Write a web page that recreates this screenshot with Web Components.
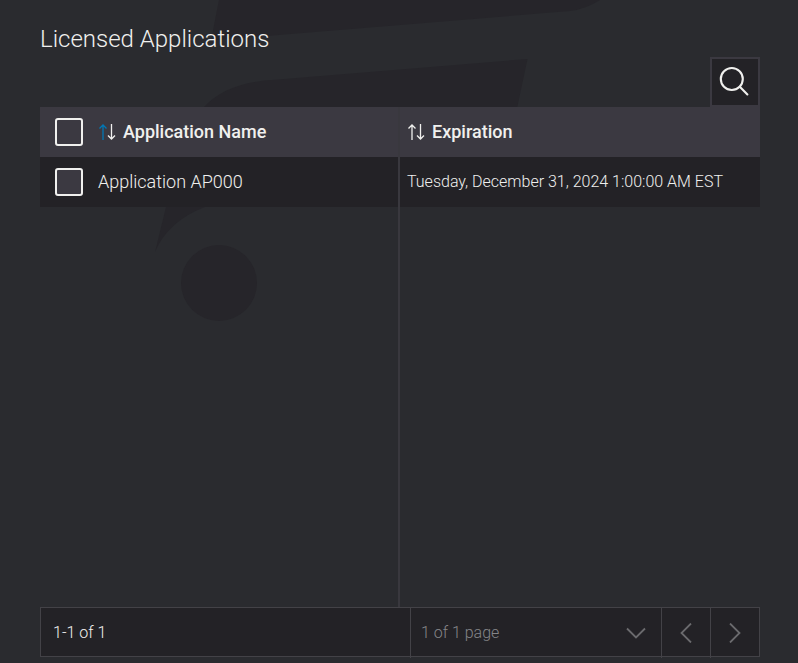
<!DOCTYPE html>
<html lang="en">
<head>
<meta charset="utf-8">
<meta name="viewport" content="width=device-width, initial-scale=1">
<title>Licensed Applications</title>
<style>
html, body { margin: 0; }
body {
  font-family: Roboto, "Liberation Sans", sans-serif;
  font-weight: 300;
  color: #f0f0ee;
  background: #2a2b2f;
  --panel: #232226;
  --head: #3b3941;
  --line: #434247;
  --divider: #39383e;
  --muted: #858588;
  --art: #26252a;
  --accent: #0077b5;
}
</style>
</head>
<body>
<licence-page>
  <span slot="title">Licensed Applications</span>
  <search-button slot="tools"></search-button>
  <licence-table slot="table"></licence-table>
  <page-bar slot="footer" range="1-1 of 1" page="1 of 1 page"></page-bar>
</licence-page>

<script>
class BaseElement extends HTMLElement {
  connectedCallback() {
    if (this.shadowRoot) return;
    this.attachShadow({ mode: "open" }).innerHTML =
      `<style>*,*::before{box-sizing:border-box}button,select,input{font:inherit;color:inherit;margin:0}svg{display:block}</style>` + this.render();
  }
}

customElements.define("backdrop-art", class extends BaseElement {
  render() {
    return `<style>
      :host { position: absolute; inset: 0; overflow: hidden; z-index: -1; }
      svg { fill: var(--art); }
    </style>
    <svg width="620" height="340" viewBox="0 0 620 340" aria-hidden="true">
      <path d="M219 0 L211 40.5 L570 11 Q586 9 600 0Z"/>
      <path d="M204 107 C219 91 240 82 272 80 L527.500 59 L496 207 L205 207 Q168 221 155 252 L180 150Z"/>
      <circle cx="219" cy="283" r="38"/>
    </svg>`;
  }
});

customElements.define("licence-page", class extends BaseElement {
  render() {
    return `<style>
      :host {
        display: flex; flex-direction: column; position: relative; z-index: 0;
        box-sizing: border-box; min-height: 100vh; padding: 24px 38px 6px 40px;
      }
      h1 { margin: 0; font-size: 24px; line-height: 30px; font-weight: 300; }
      .tools { display: flex; justify-content: flex-end; padding-top: 3px; }
      .table { flex: 1; display: flex; flex-direction: column; }
    </style>
    <backdrop-art></backdrop-art>
    <h1><slot name="title"></slot></h1>
    <div class="tools"><slot name="tools"></slot></div>
    <div class="table"><slot name="table"></slot></div>
    <slot name="footer"></slot>`;
  }
});

customElements.define("search-button", class extends BaseElement {
  render() {
    return `<style>
      :host { display: block; }
      button { display: block; width: 50px; height: 50px; padding: 7px; border: 2px solid var(--head); background: var(--panel); }
    </style>
    <button type="button" aria-label="Search">
      <svg width="32" height="32" viewBox="0 0 32 32" fill="none" stroke="currentColor" stroke-width="2.1" stroke-linecap="round">
        <circle cx="12.800" cy="13" r="11"/><path d="M20.800 20.800 L28.400 28.400"/>
      </svg>
    </button>`;
  }
});

customElements.define("check-box", class extends BaseElement {
  render() {
    return `<style>
      :host { display: block; flex: none; }
      input { display: block; appearance: none; width: 28px; height: 28px; border: 2px solid currentColor; border-radius: 3px; background: var(--head); }
      input:checked { background: var(--accent); }
    </style>
    <input type="checkbox" aria-label="${this.getAttribute("label")}">`;
  }
});

customElements.define("sort-button", class extends BaseElement {
  render() {
    return `<style>
      :host { display: block; --up: currentColor; }
      :host([sorted]) { --up: var(--accent); }
      button { display: flex; align-items: center; gap: 7px; padding: 0; border: 0; background: none; font-size: 18px; line-height: 26px; font-weight: 500; }
      svg { fill: none; stroke: currentColor; stroke-width: 1.3; }
      .up { stroke: var(--up); }
    </style>
    <button type="button">
      <svg width="18" height="18" viewBox="0 0 18 18" aria-hidden="true">
        <path class="up" d="M5 17V2M1.500 5.500L5 2L8.500 5.500"/>
        <path d="M13.500 1V16M10 12.500L13.500 16L17 12.500"/>
      </svg>
      <slot></slot>
    </button>`;
  }
});

customElements.define("licence-table", class extends BaseElement {
  render() {
    return `<style>
      :host { display: flex; flex: 1; }
      table { width: 100%; height: 100%; min-height: 500px; table-layout: fixed; border-collapse: separate; border-spacing: 0; flex: 1; }
      th, td { padding: 0 7px; height: 50px; text-align: left; font-weight: 300; }
      th:first-child, td:first-child { padding-left: 15px; border-right: 2px solid var(--divider); }
      th { background: var(--head); }
      .row td { background: var(--panel); background-clip: padding-box; font-size: 16px; line-height: 24px; }
      .row td:first-child { font-size: 18px; }
      .rest td { height: auto; }
      .cell { display: flex; align-items: center; gap: 15px; }
    </style>
    <table>
      <thead><tr>
        <th scope="col"><div class="cell"><check-box label="Select all"></check-box><sort-button sorted>Application Name</sort-button></div></th>
        <th scope="col"><sort-button>Expiration</sort-button></th>
      </tr></thead>
      <tbody>
        <tr class="row">
          <td><div class="cell"><check-box label="Select Application AP000"></check-box><span>Application AP000</span></div></td>
          <td>Tuesday, December 31, 2024 1:00:00 AM EST</td>
        </tr>
        <tr class="rest"><td></td><td></td></tr>
      </tbody>
    </table>`;
  }
});

customElements.define("page-bar", class extends BaseElement {
  render() {
    return `<style>
      :host { display: grid; grid-template-columns: 1fr 251px 49px 49px; box-sizing: border-box; height: 50px; border: 1px solid var(--line); background: var(--panel); font-size: 16px; line-height: 24px; }
      .range { padding: 13px 12px; }
      .pick { display: grid; border-left: 1px solid var(--line); color: var(--muted); }
      .pick > * { grid-area: 1 / 1; }
      select { appearance: none; width: 100%; padding: 0 10px; border: 0; background: none; opacity: 1; }
      .pick svg { place-self: center end; margin-right: 15px; pointer-events: none; }
      button { display: grid; place-items: center; padding: 0; border: 0; border-left: 1px solid var(--line); background: none; }
      svg { fill: none; stroke: #6b6b6e; stroke-width: 1.8; }
    </style>
    <div class="range">${this.getAttribute("range")}</div>
    <div class="pick">
      <select aria-label="Page" disabled><option>${this.getAttribute("page")}</option></select>
      <svg width="20" height="12" viewBox="0 0 20 12" aria-hidden="true"><path d="M1 1.500L10 10.500L19 1.500"/></svg>
    </div>
    <button type="button" aria-label="Previous page" disabled>
      <svg width="12" height="20" viewBox="0 0 12 20"><path d="M11 .5L1.500 10L11 19.500"/></svg>
    </button>
    <button type="button" aria-label="Next page" disabled>
      <svg width="12" height="20" viewBox="0 0 12 20"><path d="M1 .5L10.500 10L1 19.500"/></svg>
    </button>`;
  }
});
</script>
</body>
</html>
